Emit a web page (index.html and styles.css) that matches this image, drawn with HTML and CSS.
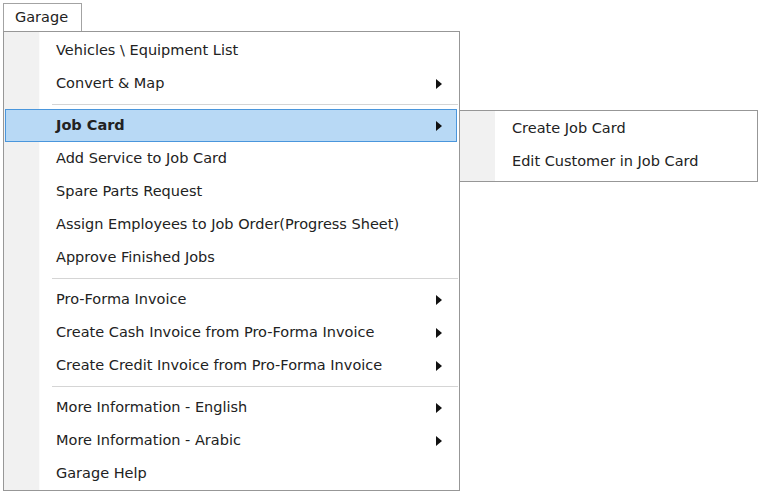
FILE: index.html
```html
<!DOCTYPE html>
<html>
<head>
<meta charset="utf-8">
<link rel="stylesheet" href="styles.css">
</head>
<body>
<div class="screen">
  <div class="tab">Garage</div>
  <div class="menu">
    <div class="item">Vehicles \ Equipment List</div>
    <div class="item sub">Convert &amp; Map<span class="arrow"></span></div>
    <div class="sep"></div>
    <div class="item sub active">Job Card<span class="arrow"></span></div>
    <div class="item">Add Service to Job Card</div>
    <div class="item">Spare Parts Request</div>
    <div class="item">Assign Employees to Job Order(Progress Sheet)</div>
    <div class="item">Approve Finished Jobs</div>
    <div class="sep"></div>
    <div class="item sub">Pro-Forma Invoice<span class="arrow"></span></div>
    <div class="item sub">Create Cash Invoice from Pro-Forma Invoice<span class="arrow"></span></div>
    <div class="item sub">Create Credit Invoice from Pro-Forma Invoice<span class="arrow"></span></div>
    <div class="sep"></div>
    <div class="item sub">More Information - English<span class="arrow"></span></div>
    <div class="item sub">More Information - Arabic<span class="arrow"></span></div>
    <div class="item">Garage Help</div>
  </div>
  <div class="submenu">
    <div class="item">Create Job Card</div>
    <div class="item">Edit Customer in Job Card</div>
  </div>
</div>
</body>
</html>
```
FILE: styles.css
```css
html, body {
  margin: 0;
  padding: 0;
  background: #ffffff;
}
body {
  font-family: "DejaVu Sans", sans-serif;
  font-size: 14.5px;
  color: #222222;
}
.screen {
  position: relative;
  width: 758px;
  height: 493px;
  padding: 3px 0 0 3px;
  box-sizing: border-box;
}
.tab {
  width: 79px;
  height: 28px;
  box-sizing: border-box;
  border: 1px solid #a3a3a3;
  border-bottom: none;
  padding-left: 11px;
  line-height: 27px;
  background: #ffffff;
  position: relative;
  z-index: 2;
}
.menu {
  width: 457px;
  box-sizing: border-box;
  border: 1px solid #979797;
  padding: 2px 0 0 0;
  background: linear-gradient(to right, #f1f1f1 0, #f1f1f1 35px, #fbfbfb 35px, #fbfbfb 36px, #ffffff 36px);
}
.menu .item {
  height: 33px;
  box-sizing: border-box;
  border: 1px solid transparent;
  margin: 0 2px 0 1px;
  padding: 0 14px 2px 50px;
  display: flex;
  align-items: center;
  justify-content: space-between;
  white-space: nowrap;
}
.menu .item.active {
  background: #b8d9f5;
  border-color: #4a96dc;
  font-weight: bold;
}
.arrow {
  width: 0;
  height: 0;
  margin-top: 2px;
  border-top: 5px solid transparent;
  border-bottom: 5px solid transparent;
  border-left: 6px solid #111111;
}
.sep {
  height: 9px;
  box-sizing: border-box;
  padding-top: 4px;
}
.sep::before {
  content: "";
  display: block;
  height: 1px;
  margin-left: 48px;
  margin-right: 1px;
  background: #d5d5d5;
  border-bottom: 1px solid #ffffff;
}
.submenu {
  position: absolute;
  left: 459px;
  top: 110px;
  width: 299px;
  box-sizing: border-box;
  border: 1px solid #979797;
  padding: 2px 0 2px 0;
  background: linear-gradient(to right, #f1f1f1 0, #f1f1f1 35px, #ffffff 35px);
}
.submenu .item {
  height: 33px;
  box-sizing: border-box;
  padding: 0 0 3px 52px;
  display: flex;
  align-items: center;
  white-space: nowrap;
}
```
